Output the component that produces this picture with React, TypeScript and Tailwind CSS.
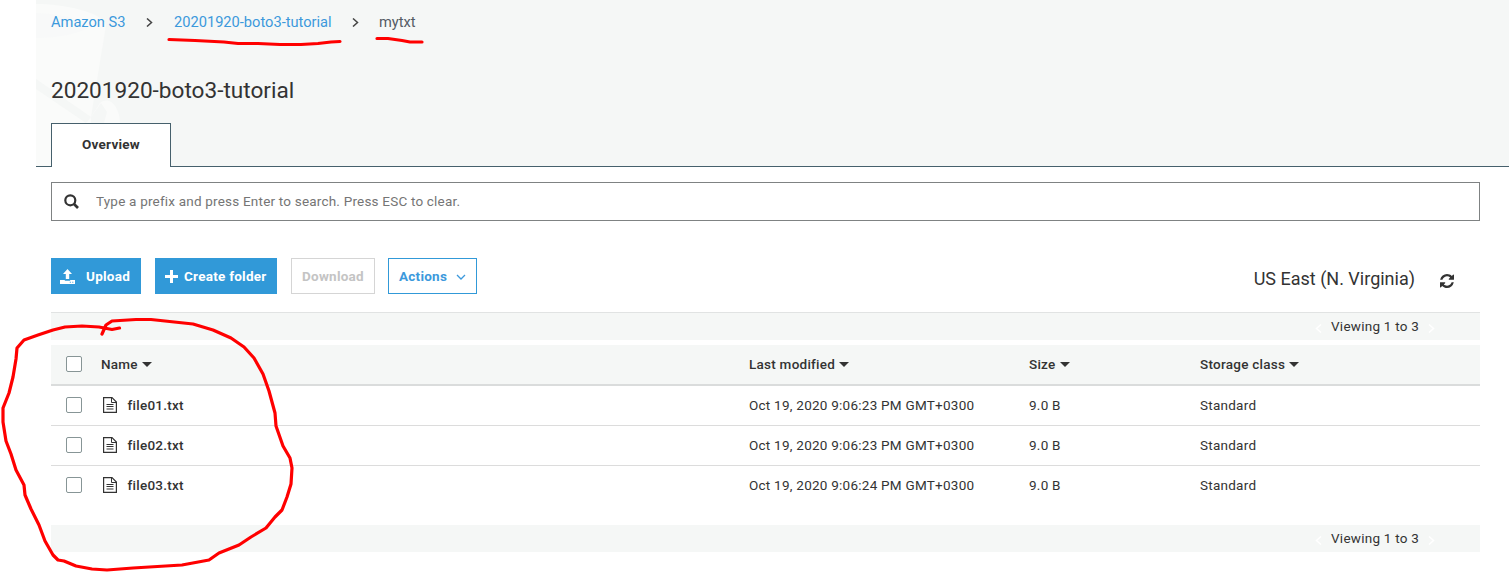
import { useState } from "react";

const files = [
  { name: "file01.txt", modified: "Oct 19, 2020 9:06:23 PM GMT+0300", size: "9.0 B", storage: "Standard" },
  { name: "file02.txt", modified: "Oct 19, 2020 9:06:23 PM GMT+0300", size: "9.0 B", storage: "Standard" },
  { name: "file03.txt", modified: "Oct 19, 2020 9:06:24 PM GMT+0300", size: "9.0 B", storage: "Standard" },
];

function Chevron({ className, d = "M1 .5l4.5 4-4.5 4" }) {
  return (
    <svg className={className} viewBox="0 0 7 9" fill="none" stroke="currentColor" strokeWidth="1.5">
      <path d={d} />
    </svg>
  );
}

function BucketArt() {
  return (
    <svg className="absolute left-0 top-0 h-[166px] w-[100px]" viewBox="0 0 100 166" fill="none">
      <path
        d="M0 4C28 4 66 12 70 25L55 117L64 103C74 95 84 108 84 123V166H0Z"
        fill="#fafbfa"
      />
      <path d="M0 13C25 14 50 20 55 26C45 34 20 38 0 38Z" fill="#f8f9f9" />
      <path d="M0 79L55 117L50 123L0 89Z" fill="#f5f7f6" />
      <path d="M55 117L65 103L71 112L68 123H55Z" fill="#f5f7f6" />
    </svg>
  );
}

function Pager({ className }) {
  return (
    <div className={`flex items-center pb-px pl-[1264px] ${className}`}>
      <Chevron className="mt-1 h-[9px] w-[7px] text-white" d="M6 .5l-4.5 4 4.5 4" />
      <span className="ml-[9px] w-[97px] whitespace-nowrap">Viewing 1 to 3</span>
      <Chevron className="mt-1 h-[9px] w-[7px] text-white" />
    </div>
  );
}

function HeaderCell({ label }) {
  return (
    <span className="flex items-center gap-1 font-medium">
      {label}
      <svg className="h-[5px] w-[10px]" viewBox="0 0 10 5" fill="currentColor">
        <path d="M0 0h10L5 5z" />
      </svg>
    </span>
  );
}

function Checkbox({ checked, onChange }) {
  return (
    <input
      type="checkbox"
      checked={checked}
      onChange={onChange}
      className="block size-4 appearance-none rounded-[2px] border border-[#879596] bg-white checked:bg-[#3199d8]"
    />
  );
}

function FileIcon() {
  return (
    <svg className="h-4 w-[14px]" viewBox="0 0 14 16" fill="none" stroke="#333">
      <path d="M.6.6h8.4l4.4 4.4v10.4H.6z" strokeWidth="1.2" />
      <path d="M8.5.5v5h5" />
      <path d="M3.5 7.5h7M3.5 9.5h7" />
      <path d="M3.5 11.5h7M3.5 12.5h7" stroke="#999" />
    </svg>
  );
}

function Annotations() {
  return (
    <svg
      className="pointer-events-none absolute left-0 top-0 h-[582px] w-[440px]"
      viewBox="0 0 440 582"
      fill="none"
      stroke="#ff0000"
      strokeWidth="3.2"
      strokeLinecap="round"
      strokeLinejoin="round"
    >
      <path d="M169 39.5L195 40.5L224 42L238 43.5L258 43.5L280 44.5L301 44.5L318 43.5L331 42L340 41.5" />
      <path d="M377 38.5H388L395 39.5L402 40.5L410 42H422" />
      <path d="M119.5 328L112 329.5L99 327L82 326L65 327L53 330L38 335L24 340L17 348L16 359L13 377L9 393L3 408L3 422L6 441L11 454L16 470L24 485L25 495L31 509L39 525L45 541L53 555L58 560L64 561L76 566L92 569L107 570L133 568L182 565L209 560L219 553L239 545L251 537L266 528L275 517L282 510L287 497L291 484L292 468L290 458L283 446L276 426L275 413L269 391L263 374L254 358L244 347L231 338L213 330L193 324L165 321L151 319.5H136L112 321L106 325L102 334" />
    </svg>
  );
}

export default function App() {
  const [selected, setSelected] = useState([]);

  const toggle = (name) => {
    setSelected(
      selected.includes(name) ? selected.filter((n) => n !== name) : [...selected, name]
    );
  };

  const toggleAll = () => {
    setSelected(selected.length === files.length ? [] : files.map((f) => f.name));
  };

  return (
    <div className="relative h-[582px] overflow-hidden bg-white pl-9 font-[Roboto,sans-serif] text-[13.5px] leading-5 tracking-[0.25px] text-[#333]">
      <header className="relative h-[167px] border-b border-[#46606c] bg-[#f5f7f6] pl-[15px]">
        <BucketArt />
        <nav className="relative flex h-11 items-center text-[14.65px] tracking-normal text-[#545b64]">
          <a href="#" className="w-[75px] text-[#3c99dc]">Amazon S3</a>
          <Chevron className="ml-[20px] h-[9px] w-[7px] text-[#444]" />
          <a href="#" className="ml-[21px] w-[158px] whitespace-nowrap text-[#3c99dc]">20201920-boto3-tutorial</a>
          <Chevron className="ml-[20px] h-[9px] w-[7px] text-[#444]" />
          <span className="ml-[20px]">mytxt</span>
        </nav>
        <h1 className="relative mt-[31px] text-[22.6px] leading-8 tracking-normal">20201920-boto3-tutorial</h1>
        <div className="relative mt-[16px] flex h-11 w-[120px] items-center justify-center border border-b-0 border-[#46606c] bg-white pb-[3px] font-bold">
          Overview
        </div>
      </header>

      <main className="pl-[15px] pr-[29px]">
        <div className="mt-[15px] flex h-[39px] items-center border border-[#7f8283] pl-3">
          <svg className="size-[15px]" viewBox="0 0 15 15" fill="none" stroke="currentColor">
            <circle cx="6.3" cy="6.3" r="5" strokeWidth="2.2" />
            <path d="M10 10l4 4" strokeWidth="2.6" />
          </svg>
          <input
            type="text"
            placeholder="Type a prefix and press Enter to search. Press ESC to clear."
            className="ml-[17px] flex-1 pb-px tracking-[0.2px] outline-none placeholder:text-[#757575]"
          />
        </div>

        <div className="mt-[37px] flex h-9 items-center font-bold">
          <button className="flex h-9 w-[90px] items-center bg-[#3199d8] pl-[9px] text-white">
            <svg className="h-[15px] w-[15px]" viewBox="0 0 15 15" fill="currentColor">
              <path d="M7.5 0l4.5 5H9.2v5H5.8V5H3z" />
              <path fillRule="evenodd" d="M0 11h4.8v.8h5.4V11H15v4H0zM9.8 12.8v1h1v-1zM12.3 12.8v1h1v-1z" />
            </svg>
            <span className="ml-[11px]">Upload</span>
          </button>
          <button className="ml-[14px] flex h-9 w-[122px] items-center whitespace-nowrap bg-[#3199d8] pl-[10px] text-white">
            <svg className="size-[13px]" viewBox="0 0 13 13" fill="currentColor">
              <path d="M5 0h3v5h5v3H8v5H5V8H0V5h5z" />
            </svg>
            <span className="ml-[6px]">Create folder</span>
          </button>
          <button disabled className="ml-[14px] h-9 w-[84px] border border-[#d5d5d5] text-[#c4c4c4]">
            Download
          </button>
          <button className="ml-[13px] flex h-9 w-[89px] items-center border border-[#3199d8] pl-[10px] text-[#3c99dc]">
            Actions
            <svg className="ml-[9px] mt-0.5 h-[6px] w-[10px]" viewBox="0 0 10 6" fill="none" stroke="currentColor" strokeWidth="1.3">
              <path d="M1 1l4 4 4-4" />
            </svg>
          </button>
          <div className="ml-auto mt-1.5 flex items-center pr-[26px] font-normal tracking-normal">
            <span className="text-[18px]">US East (N. Virginia)</span>
            <svg className="ml-[25px] mt-1 size-[14px]" viewBox="0 0 1536 1536" fill="currentColor">
              <path d="M1511 928q0 5-1 7-64 268-268 434.500T764 1536q-146 0-282.500-55T238 1324l-129 129q-19 19-45 19t-45-19-19-45V960q0-26 19-45t45-19h448q26 0 45 19t19 45-19 45l-137 137q71 66 161 102t187 36q134 0 250-65t186-179q11-17 53-117 8-23 30-23h192q13 0 22.500 9.500t9.500 22.500zM1536 128v448q0 26-19 45t-45 19h-448q-26 0-45-19t-19-45 19-45l138-138Q969 256 768 256q-134 0-250 65T332 500q-11 17-53 117-8 23-30 23H50q-13 0-22.500-9.500T18 608v-7q65-268 270-434.500T768 0q146 0 284 55.500T1297 212l130-129q19-19 45-19t45 19 19 45z" />
            </svg>
          </div>
        </div>

        <Pager className="mt-[18px] h-7 border-t border-[#e1e3e3] bg-[#f5f7f6]" />

        <div className="mt-[5px] grid h-[41px] grid-cols-[50px_648px_280px_171px_1fr] items-center border-b-2 border-[#dadcdc] bg-[#f5f7f6] pb-px">
          <div className="pl-[15px]">
            <Checkbox checked={selected.length === files.length} onChange={toggleAll} />
          </div>
          <HeaderCell label="Name" />
          <HeaderCell label="Last modified" />
          <HeaderCell label="Size" />
          <HeaderCell label="Storage class" />
        </div>

        <div>
          {files.map((file) => (
            <div
              key={file.name}
              className="grid h-10 grid-cols-[50px_648px_280px_171px_1fr] items-center border-b border-[#dcdcdc] pb-px last:border-transparent"
            >
              <div className="pl-[15px]">
                <Checkbox checked={selected.includes(file.name)} onChange={() => toggle(file.name)} />
              </div>
              <div className="flex items-center gap-[10.5px] pl-0.5 font-medium">
                <FileIcon />
                {file.name}
              </div>
              <span>{file.modified}</span>
              <span>{file.size}</span>
              <span>{file.storage}</span>
            </div>
          ))}
        </div>

        <Pager className="mt-[19px] h-[27px] bg-[#f5f7f6]" />
      </main>

      <Annotations />
    </div>
  );
}
